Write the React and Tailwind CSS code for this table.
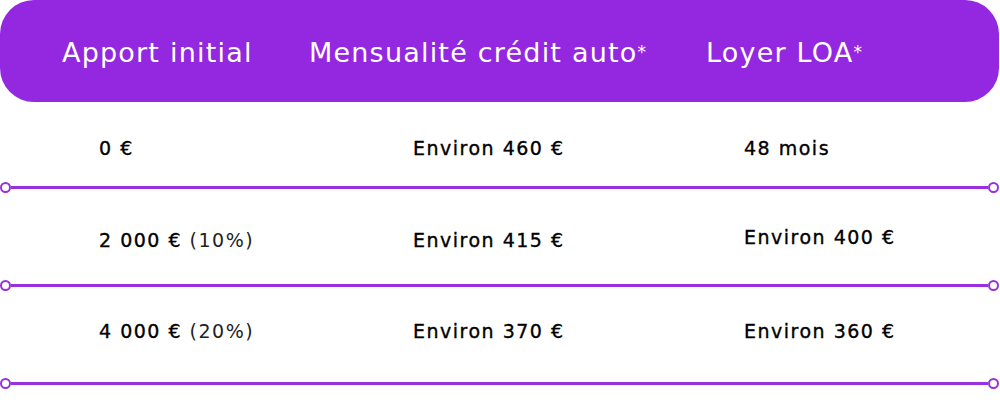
import React from "react";

const rows = [
  { pt: "pt-[33px]", pb: "pb-[21px]", a: "0 €", p: "", b: "Environ 460 €", c: "48 mois", cShift: "" },
  { pt: "pt-[34px]", pb: "pb-[27px]", a: "2 000 €", p: "(10%)", b: "Environ 415 €", c: "Environ 400 €", cShift: "-translate-y-[3px]" },
  { pt: "pt-[27px]", pb: "pb-[34px]", a: "4 000 €", p: "(20%)", b: "Environ 370 €", c: "Environ 360 €", cShift: "" },
];

function Line() {
  return (
    <div className="flex items-center w-[999px] h-[11px]">
      <div className="w-[11px] h-[11px] rounded-full border-2 border-[#9a2fe0] bg-white shrink-0" />
      <div className="flex-1 h-[3px] bg-[#9a2fe0]" />
      <div className="w-[11px] h-[11px] rounded-full border-2 border-[#9a2fe0] bg-white shrink-0" />
    </div>
  );
}

export default function App() {
  return (
    <div
      className="w-[1000px] h-[405px] bg-white overflow-hidden"
      style={{ fontFamily: "'DejaVu Sans', 'Noto Sans', sans-serif" }}
    >
      <div className="w-[999px] h-[102px] rounded-[34px] bg-[#9428e0] flex items-center text-white text-[27px] leading-[36px] tracking-[1.2px] pt-[4px]">
        <div className="w-[309px] pl-[62px] whitespace-nowrap">Apport initial</div>
        <div className="w-[397px] whitespace-nowrap">Mensualité crédit auto<sup className="text-[17px] relative -top-[4px]">*</sup></div>
        <div className="whitespace-nowrap">Loyer LOA<sup className="text-[17px] relative -top-[4px]">*</sup></div>
      </div>
      {rows.map((r, i) => (
        <div key={i}>
          <div className={`flex items-center text-[19px] leading-[26px] tracking-[1.5px] text-black ${r.pt} ${r.pb}`}>
            <div className="w-[413px] pl-[99px] whitespace-nowrap">
              <span className="[-webkit-text-stroke:0.35px_#000]">{r.a}</span>
              {r.p && <span className="text-[#222]"> {r.p}</span>}
            </div>
            <div className="w-[331px] whitespace-nowrap [-webkit-text-stroke:0.35px_#000]">{r.b}</div>
            <div className={`whitespace-nowrap [-webkit-text-stroke:0.35px_#000] ${r.cShift}`}>{r.c}</div>
          </div>
          <Line />
        </div>
      ))}
    </div>
  );
}
